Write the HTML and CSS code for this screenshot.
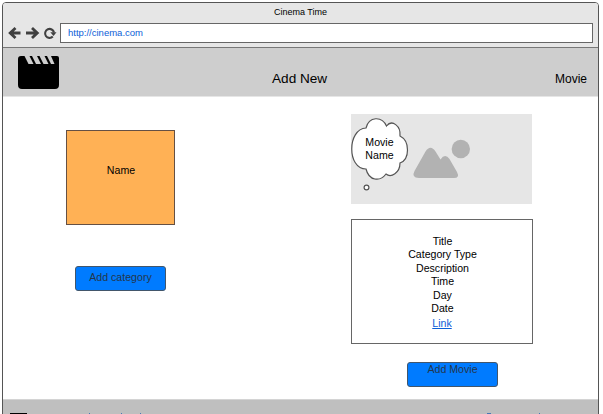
FILE: index.html
```
<!DOCTYPE html>
<html lang="en">
<head>
<meta charset="utf-8">
<title>Cinema Time</title>
<link rel="stylesheet" href="styles.css">
</head>
<body>
<div class="window">
  <header class="chrome">
    <div class="title">Cinema Time</div>
    <div class="toolbar">
      <svg class="nav" width="52" height="20" viewBox="0 0 52 20" fill="none" stroke="#404040" stroke-width="2.8">
        <path d="M12.500 10H2.500M7.500 5L2.200 10l5.300 5"/>
        <path d="M18 10h10.500M24 5l5.300 5L24 15"/>
        <path d="M44.800 13.600A4.500 4.500 0 1 1 46 9.500" stroke-width="2.100"/>
        <path d="M42.300 9.300h6.200l-3 3.700z" fill="#404040" stroke="none"/>
      </svg>
      <div class="address">http://cinema.com</div>
    </div>
  </header>
  <nav class="banner">
    <svg class="clapper" width="41" height="33" viewBox="0 0 41 33">
      <path d="M3 0H6.500L10.500 8H15.500L11.500 0H14L18 8H23L19 0H21.500L25.500 8H30.500L26.500 0H29L33 8H36.500L33 0H39Q41 0 41 2V29Q41 33 37 33H4Q0 33 0 29V3Q0 0 3 0Z"/>
    </svg>
    <div class="heading">Add New</div>
    <div class="section">Movie</div>
  </nav>
  <main class="content">
    <section class="category">
      <div class="category-card">Name</div>
      <div class="button">Add category</div>
    </section>
    <section class="movie">
      <div class="poster">
        <svg width="181" height="90" viewBox="0 0 181 90">
          <g fill="#b2b2b2">
            <circle cx="109.800" cy="35" r="9.200"/>
            <path d="M63.500 57L74.500 37.500Q79.500 30 84.500 37.500L89.500 45.500Q94 39 98.500 45L106 58Q109 64 103 64H68Q60 63.500 63.500 57Z"/>
          </g>
          <g fill="#fff" stroke="#555" stroke-width="1.200">
            <path d="M15 14C18 2 31 2 35.500 12C41 5 50 12 49 22C59 27 59 45 49 49C49 59 40 64 35 60C29 68 18 67 15 55C-4 55-4 15 15 14Z"/>
            <circle cx="15.500" cy="73.500" r="2.400"/>
          </g>
        </svg>
        <div class="poster-name">Movie<br>Name</div>
      </div>
      <div class="details">
        <div>Title</div>
        <div>Category Type</div>
        <div>Description</div>
        <div>Time</div>
        <div>Day</div>
        <div>Date</div>
        <a class="link">Link</a>
      </div>
      <div class="button button-movie">Add Movie</div>
    </section>
  </main>
  <footer class="footer">
    <svg width="596" height="14" viewBox="0 0 596 14">
      <path d="M7 13h17v1H7z" fill="#000"/>
      <path d="M86 13h1v1h-1zM118 13h1v1h-1zM137 13h1v1h-1zM484 13h4v1h-4zM536 13h1v1h-1z" fill="#4977b5"/>
    </svg>
  </footer>
</div>
</body>
</html>
```
FILE: styles.css
```
* { box-sizing: border-box; }
body {
  margin: 0;
  height: 414px;
  overflow: hidden;
  background: #fff;
  color: #000;
  font: 10.6px/13.4px "Liberation Sans", sans-serif;
}
.window {
  width: 597px;
  height: 420px;
  margin: 2px 0 0 2px;
  border: 1px solid #555;
  border-radius: 4px 4px 0 0;
  overflow: hidden;
}
.chrome {
  height: 45px;
  background: #e6e6e6;
  border-bottom: 1px solid #777;
}
.title {
  height: 20px;
  padding-top: 3px;
  font-size: 9px;
  line-height: 13px;
  text-align: center;
}
.toolbar { display: flex; padding-left: 5px; }
.address {
  width: 533px;
  height: 20px;
  padding-left: 7px;
  border: 1px solid #666;
  background: #fff;
  color: #0b5ed7;
  font-size: 9.5px;
  line-height: 18px;
}
.banner {
  display: flex;
  height: 48px;
  padding: 8px 11px 0 15px;
  background: #cecece;
}
.heading {
  width: 56px;
  margin: 15px auto 0 213px;
  font-size: 13.6px;
  line-height: 16px;
  white-space: nowrap;
}
.section { margin-top: 15px; font-size: 12px; line-height: 16px; }
.content {
  display: flex;
  height: 303px;
  border-top: 1px solid #e6e6e6;
}
.category { width: 109px; margin: 33px 176px 0 63px; }
.category-card {
  height: 95px;
  padding: 33px 0 0 1px;
  border: 1px solid #655044;
  background: #ffb155;
  text-align: center;
}
.button {
  width: 91px;
  height: 25px;
  margin: 41px 0 0 9px;
  padding-top: 4px;
  border: 1px solid #42566b;
  border-radius: 3px;
  background: #007bff;
  color: #24364b;
  text-align: center;
}
.movie { width: 182px; padding-top: 17px; }
.poster {
  position: relative;
  width: 181px;
  height: 90px;
  background: #e6e6e6;
}
.poster svg { display: block; }
.poster-name {
  position: absolute;
  left: 0;
  top: 22px;
  width: 57px;
  text-align: center;
}
.details {
  height: 125px;
  margin-top: 15px;
  padding: 15px 0 0 1px;
  border: 1px solid #666;
  text-align: center;
}
.link {
  display: block;
  margin: 2px 1px 0 0;
  color: #0b5ed7;
  text-decoration: underline;
}
.button-movie { margin: 18px 0 0 56px; padding-top: 0; }
.footer {
  height: 20px;
  background: #bfbfbf;
  border-top: 1px solid #d4d4d4;
}
.footer svg { display: block; }
```
